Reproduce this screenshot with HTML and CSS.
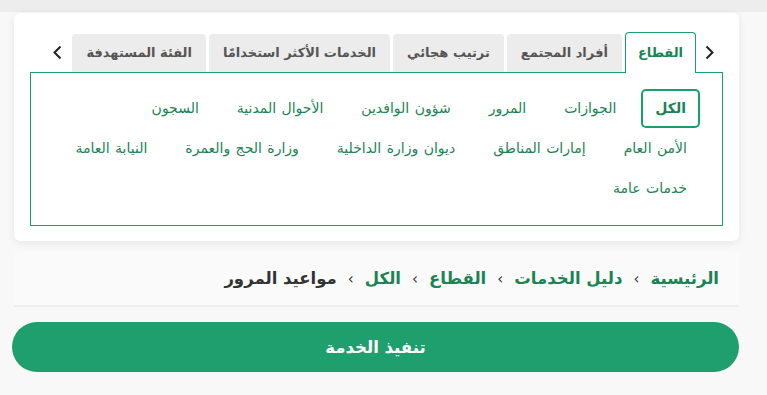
FILE: index.html
```html
<!DOCTYPE html>
<html lang="ar" dir="rtl">
<head>
  <meta charset="UTF-8">
  <title>دليل الخدمات</title>
  <link rel="stylesheet" href="styles.css">
</head>
<body>
  <div class="topbar"></div>
  <div class="page">
    <!-- بطاقة التصنيفات -->
    <div class="card">
      <div class="tabs-row">
        <div class="tab-arrow arrow-next">
          <svg width="9" height="15" viewBox="0 0 9 15"><path d="M1.5 1.5 L7.5 7.5 L1.5 13.5" fill="none" stroke="#222" stroke-width="2"/></svg>
        </div>
        <div class="tabs">
          <div class="tab active">القطاع</div>
          <div class="tab">أفراد المجتمع</div>
          <div class="tab">ترتيب هجائي</div>
          <div class="tab">الخدمات الأكثر استخدامًا</div>
          <div class="tab">الفئة المستهدفة</div>
        </div>
        <div class="tab-arrow arrow-prev">
          <svg width="9" height="15" viewBox="0 0 9 15"><path d="M7.5 1.5 L1.5 7.5 L7.5 13.5" fill="none" stroke="#222" stroke-width="2"/></svg>
        </div>
      </div>
      <div class="tab-panel">
        <div class="chip-row">
          <div class="chip selected">الكل</div>
          <div class="chip">الجوازات</div>
          <div class="chip">المرور</div>
          <div class="chip">شؤون الوافدين</div>
          <div class="chip">الأحوال المدنية</div>
          <div class="chip">السجون</div>
        </div>
        <div class="chip-row">
          <div class="chip">الأمن العام</div>
          <div class="chip">إمارات المناطق</div>
          <div class="chip">ديوان وزارة الداخلية</div>
          <div class="chip">وزارة الحج والعمرة</div>
          <div class="chip">النيابة العامة</div>
        </div>
        <div class="chip-row">
          <div class="chip">خدمات عامة</div>
        </div>
      </div>
    </div>

    <!-- مسار التنقل -->
    <div class="breadcrumb">
      <a class="crumb">الرئيسية</a>
      <span class="sep">›</span>
      <a class="crumb">دليل الخدمات</a>
      <span class="sep">›</span>
      <a class="crumb">القطاع</a>
      <span class="sep">›</span>
      <a class="crumb">الكل</a>
      <span class="sep">›</span>
      <span class="crumb current">مواعيد المرور</span>
    </div>

    <button class="btn-service">تنفيذ الخدمة</button>
  </div>
</body>
</html>
```

FILE: styles.css
```css
body {
  margin: 0;
  font-family: "DejaVu Sans", sans-serif;
  background: #f8f8f8;
  color: #333;
}
.topbar {
  height: 12px;
  background: #ededed;
}
.page {
  padding: 1px 28px 0 14px;
}
.card {
  background: #fff;
  border-radius: 6px;
  box-shadow: 0 2px 8px rgba(0,0,0,0.08);
  padding: 19px 16px 15px 16px;
}
.tabs-row {
  display: flex;
  align-items: flex-end;
  height: 40px;
}
.tab-arrow {
  display: flex;
  align-items: center;
  height: 40px;
}
.arrow-next {
  width: 27px;
  justify-content: center;
}
.arrow-prev {
  flex: 1;
  justify-content: flex-start;
  padding-right: 10px;
}
.tabs {
  display: flex;
  align-items: flex-end;
  gap: 3px;
}
.tab {
  height: 38px;
  line-height: 38px;
  padding: 0 14px;
  background: #ececec;
  border-radius: 4px 4px 0 0;
  font-size: 13px;
  font-weight: bold;
  color: #555;
  white-space: nowrap;
}
.tab.active {
  height: 40px;
  line-height: 40px;
  padding: 0 12px;
  background: #fff;
  border: 1px solid #17a06a;
  border-bottom: none;
  margin-bottom: -1px;
  color: #1b8354;
  position: relative;
  z-index: 1;
}
.tab-panel {
  border: 1px solid #17a06a;
  padding: 16px 22px 17px 22px;
  display: flex;
  flex-direction: column;
  gap: 1px;
}
.chip-row {
  display: flex;
  gap: 12px;
}
.chip {
  height: 39px;
  line-height: 35px;
  box-sizing: border-box;
  padding: 0 11px;
  border: 2px solid transparent;
  border-radius: 5px;
  font-size: 14px;
  word-spacing: 1px;
  color: #1b8354;
  white-space: nowrap;
}
.chip.selected {
  padding: 0 12px;
  border-color: #17a06a;
  font-weight: bold;
}
.breadcrumb {
  margin-top: 11px;
  height: 53px;
  background: #fafafa;
  border-bottom: 2px solid #efefef;
  display: flex;
  align-items: center;
  padding: 0 20px;
  gap: 11px;
}
.crumb {
  font-size: 16.5px;
  font-weight: bold;
  color: #1b8354;
}
.crumb.current {
  color: #333;
}
.sep {
  font-size: 15px;
  color: #333;
}
.btn-service {
  display: block;
  width: 727px;
  margin: 15px 0 0 -1px;
  height: 50px;
  border: none;
  border-radius: 25px;
  background: #1f9f6e;
  color: #fff;
  font-family: "DejaVu Sans", sans-serif;
  font-size: 16.5px;
  font-weight: bold;
}
```
